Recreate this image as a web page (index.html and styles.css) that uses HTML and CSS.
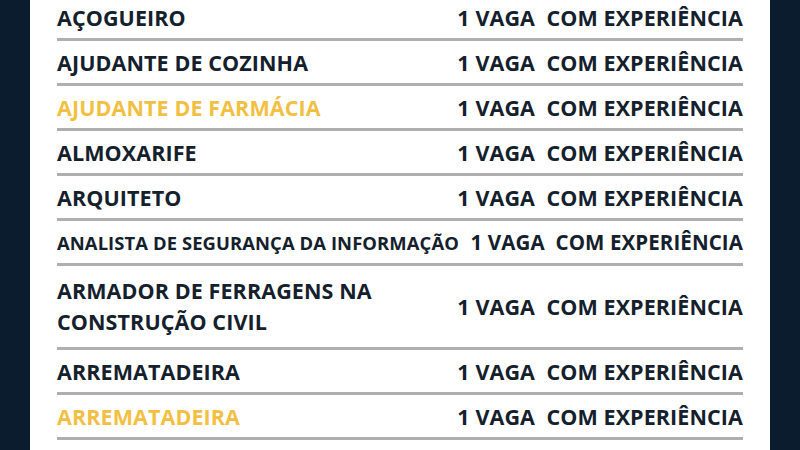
FILE: index.html
```html
<!DOCTYPE html>
<html lang="pt-BR">
<head>
<meta charset="utf-8">
<title>Vagas</title>
<link rel="stylesheet" href="styles.css">
</head>
<body>
<main class="panel">
  <ul class="jobs">
    <li class="row"><span class="role">AÇOGUEIRO</span><span class="info">1 VAGA&nbsp; COM EXPERIÊNCIA</span></li>
    <li class="row"><span class="role">AJUDANTE DE COZINHA</span><span class="info">1 VAGA&nbsp; COM EXPERIÊNCIA</span></li>
    <li class="row"><span class="role role--hl">AJUDANTE DE FARMÁCIA</span><span class="info">1 VAGA&nbsp; COM EXPERIÊNCIA</span></li>
    <li class="row"><span class="role">ALMOXARIFE</span><span class="info">1 VAGA&nbsp; COM EXPERIÊNCIA</span></li>
    <li class="row"><span class="role">ARQUITETO</span><span class="info">1 VAGA&nbsp; COM EXPERIÊNCIA</span></li>
    <li class="row row--small"><span class="role">ANALISTA DE SEGURANÇA DA INFORMAÇÃO</span><span class="info">1 VAGA&nbsp; COM EXPERIÊNCIA</span></li>
    <li class="row row--tall"><span class="role">ARMADOR DE FERRAGENS NA<br>CONSTRUÇÃO CIVIL</span><span class="info">1 VAGA&nbsp; COM EXPERIÊNCIA</span></li>
    <li class="row"><span class="role">ARREMATADEIRA</span><span class="info">1 VAGA&nbsp; COM EXPERIÊNCIA</span></li>
    <li class="row"><span class="role role--hl">ARREMATADEIRA</span><span class="info">1 VAGA&nbsp; COM EXPERIÊNCIA</span></li>
    <li class="row"><span class="role">ASSISTENTE ADMINISTRATIVO</span><span class="info">1 VAGA&nbsp; COM EXPERIÊNCIA</span></li>
  </ul>
</main>
</body>
</html>
```
FILE: styles.css
```css
html, body {
  margin: 0;
  padding: 0;
  height: 100%;
  overflow: hidden;
}
body {
  background: #0a1c2e;
  font-family: "Open Sans", "Liberation Sans", sans-serif;
  font-weight: 700;
  color: #14202c;
}
.panel {
  background: #ffffff;
  margin: -4px 30px 0 30px;
  padding: 0 27px;
  min-height: 500px;
}
.jobs {
  list-style: none;
  margin: 0;
  padding: 0;
}
.row {
  display: flex;
  align-items: center;
  justify-content: space-between;
  min-height: 42px;
  border-bottom: 3px solid #afafaf;
  font-size: 21.5px;
  line-height: 31px;
  letter-spacing: 0.1px;
}
.row--tall {
  padding: 9px 0 10px;
}
.row--small .role {
  font-size: 18.4px;
}
.row--small .info {
  font-size: 20.5px;
}
.role {
  white-space: nowrap;
}
.role--hl {
  color: #f3bf42;
}
.info {
  white-space: nowrap;
  text-align: right;
}
```
